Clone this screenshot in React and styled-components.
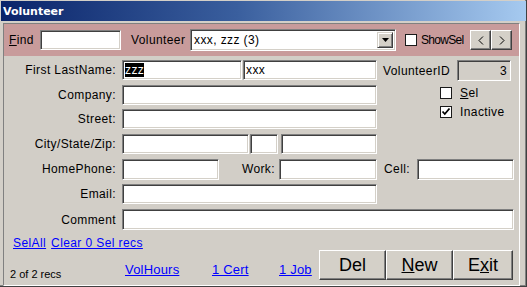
import React from 'react';
import styled, { createGlobalStyle } from 'styled-components';

const Global = createGlobalStyle`
  html, body { margin: 0; padding: 0; background: #d4d0c8; }
  body { font-family: "Liberation Sans", Arial, sans-serif; font-size: 12px; color: #000; letter-spacing: 0.4px; }
  #root { width: 527px; height: 287px; }
`;

const Window = styled.div`
  width: 527px;
  height: 287px;
  box-sizing: border-box;
  padding: 1px 1px 0 1px;
  background: #d3cfc8;
  display: flex;
  flex-direction: column;
  overflow: hidden;
  box-shadow: inset -1px -1px 0 #404040, inset -2px -2px 0 #808080;
`;

const TitleBar = styled.div`
  height: 20px;
  flex-shrink: 0;
  display: flex;
  align-items: center;
  padding-left: 2px;
  background: linear-gradient(to right, #0a246a 0%, #3a5f9e 45%, #a6caf0 100%);
  color: #fff;
  font-family: "DejaVu Sans", Verdana, sans-serif;
  font-weight: bold;
  font-size: 11px;
  letter-spacing: 0;
`;

const Frame = styled.div`
  flex: 1;
  margin: 2px 6px 3px 2px;
  display: flex;
  flex-direction: column;
  border-top: 1px solid #808080;
  border-left: 1px solid #808080;
  border-right: 1px solid #ffffff;
  border-bottom: 1px solid #ffffff;
  background: #d2cec7;
`;

const Header = styled.div`
  height: 32px;
  flex-shrink: 0;
  display: flex;
  align-items: center;
  padding: 0 7px 0 5px;
  background: #c89b9b;
`;

const HeaderLabel = styled.span`
  width: ${p => p.$w}px;
  margin-left: ${p => p.$ml || 0}px;
  flex-shrink: 0;
  white-space: nowrap;
`;

const TextBox = styled.div`
  box-sizing: border-box;
  width: ${p => p.$w}px;
  height: ${p => p.$h || 20}px;
  margin-left: ${p => p.$ml || 0}px;
  flex-shrink: 0;
  display: flex;
  align-items: center;
  justify-content: ${p => (p.$right ? 'flex-end' : 'flex-start')};
  padding: 0 3px 0 2px;
  background: ${p => (p.$gray ? '#d2cec7' : '#ffffff')};
  border-top: 1px solid #808080;
  border-left: 1px solid #808080;
  border-right: 1px solid #ffffff;
  border-bottom: 1px solid #ffffff;
  box-shadow: inset 1px 1px 0 #404040, inset -1px -1px 0 #d4d0c8;
  white-space: nowrap;
  overflow: hidden;
`;

const Selected = styled.span`
  background: #000;
  color: #fff;
  line-height: 14px;
`;

const Combo = styled.div`
  box-sizing: border-box;
  width: 206px;
  height: 22px;
  flex-shrink: 0;
  display: flex;
  align-items: center;
  padding: 2px 2px 2px 3px;
  background: #fff;
  border-top: 1px solid #808080;
  border-left: 1px solid #808080;
  border-right: 1px solid #ffffff;
  border-bottom: 1px solid #ffffff;
  box-shadow: inset 1px 1px 0 #404040, inset -1px -1px 0 #d4d0c8;
`;

const ComboText = styled.span`
  flex: 1;
`;

const DropButton = styled.div`
  box-sizing: border-box;
  width: 16px;
  height: 16px;
  display: flex;
  align-items: center;
  justify-content: center;
  background: #d4d0c8;
  border-top: 1px solid #d4d0c8;
  border-left: 1px solid #d4d0c8;
  border-right: 1px solid #404040;
  border-bottom: 1px solid #404040;
  box-shadow: inset 1px 1px 0 #ffffff, inset -1px -1px 0 #808080;
`;

const Check = styled.div`
  box-sizing: border-box;
  width: 12px;
  height: 12px;
  margin-left: ${p => p.$ml || 0}px;
  flex-shrink: 0;
  background: #fff;
  border: 1px solid #1a1a1a;
  display: flex;
  align-items: center;
  justify-content: center;
`;

const CheckText = styled.span`
  margin-left: ${p => p.$ml || 8}px;
  letter-spacing: ${p => (p.$tight ? '-0.7px' : '0.4px')};
  white-space: nowrap;
`;

const NavGroup = styled.div`
  margin-left: auto;
  display: flex;
`;

const NavButton = styled.div`
  box-sizing: border-box;
  width: 21px;
  height: 20px;
  display: flex;
  align-items: center;
  justify-content: center;
  background: #d4d0c8;
  border-top: 1px solid #ffffff;
  border-left: 1px solid #ffffff;
  border-right: 1px solid #404040;
  border-bottom: 1px solid #404040;
  box-shadow: inset -1px -1px 0 #808080;
`;

const Body = styled.div`
  flex: 1;
  display: flex;
  flex-direction: column;
`;

const Form = styled.div`
  display: flex;
  flex-direction: column;
  gap: 4.7px;
  padding-top: 4px;
`;

const TopSection = styled.div`
  display: flex;
  align-items: flex-start;
`;

const LeftCol = styled.div`
  width: 372px;
  display: flex;
  flex-direction: column;
  gap: 4.7px;
`;

const RightCol = styled.div`
  margin-left: 7px;
  display: flex;
  flex-direction: column;
`;

const Row = styled.div`
  display: flex;
  align-items: center;
  height: ${p => p.$h || 20}px;
`;

const FieldLabel = styled.span`
  width: 112px;
  margin-right: 6px;
  text-align: right;
  flex-shrink: 0;
  white-space: nowrap;
`;

const SubLabel = styled.span`
  width: ${p => p.$w}px;
  margin-left: ${p => p.$ml || 0}px;
  text-align: ${p => (p.$right ? 'right' : 'left')};
  flex-shrink: 0;
  white-space: nowrap;
`;

const CheckRow = styled.div`
  display: flex;
  align-items: center;
  height: 12px;
  padding-left: 57px;
  margin-top: ${p => p.$mt}px;
`;

const LinkRow = styled.div`
  display: flex;
  gap: 5px;
  padding-left: 9px;
  margin-top: 6px;
  height: 14px;
  line-height: 14px;
`;

const Link = styled.a`
  color: #0000ff;
  text-decoration: underline;
  font-size: ${p => p.$fs || 12}px;
  letter-spacing: ${p => (p.$fs ? '0.2px' : '0.4px')};
  cursor: pointer;
`;

const Footer = styled.div`
  margin-top: auto;
  display: flex;
  align-items: flex-end;
  height: 30px;
  padding: 0 6px 5px 6px;
`;

const RecCount = styled.span`
  width: 115px;
  font-size: 11px;
  line-height: 12px;
  letter-spacing: 0;
  flex-shrink: 0;
`;

const FooterLink = styled.span`
  width: ${p => p.$w}px;
  flex-shrink: 0;
  line-height: 15px;
  margin-bottom: 2px;
`;

const ButtonGroup = styled.div`
  margin-left: auto;
  display: flex;
`;

const BigButton = styled.div`
  box-sizing: border-box;
  width: ${p => p.$w}px;
  height: 30px;
  display: flex;
  align-items: center;
  justify-content: center;
  background: #d4d0c8;
  border-top: 1px solid #ffffff;
  border-left: 1px solid #ffffff;
  border-right: 1px solid #404040;
  border-bottom: 1px solid #404040;
  box-shadow: inset -1px -1px 0 #808080;
  font-size: 18px;
  letter-spacing: 0;
`;

const CheckMark = () => (
  <svg width="10" height="10" viewBox="0 0 10 10">
    <polyline points="1.5,4.5 3.8,7 8.5,1.5" fill="none" stroke="#000" strokeWidth="1.8" />
  </svg>
);

const DownArrow = () => (
  <svg width="7" height="4" viewBox="0 0 7 4">
    <polygon points="0,0 7,0 3.5,4" fill="#000" />
  </svg>
);

const Chevron = ({ dir }) => (
  <svg width="6" height="9" viewBox="0 0 6 9">
    <polyline
      points={dir === 'left' ? '5,0.5 1,4.5 5,8.5' : '1,0.5 5,4.5 1,8.5'}
      fill="none"
      stroke="#000"
      strokeWidth="1"
    />
  </svg>
);

export default function App() {
  return (
    <>
      <Global />
      <Window>
        <TitleBar>Volunteer</TitleBar>
        <Frame>
          <Header>
            <HeaderLabel $w={31}><u>F</u>ind</HeaderLabel>
            <TextBox $w={81} />
            <HeaderLabel $w={59} $ml={10}>Volunteer</HeaderLabel>
            <Combo>
              <ComboText>xxx, zzz (3)</ComboText>
              <DropButton><DownArrow /></DropButton>
            </Combo>
            <Check $ml={9} />
            <CheckText $ml={4} $tight>ShowSel</CheckText>
            <NavGroup>
              <NavButton><Chevron dir="left" /></NavButton>
              <NavButton><Chevron dir="right" /></NavButton>
            </NavGroup>
          </Header>
          <Body>
            <Form>
              <TopSection>
                <LeftCol>
                  <Row>
                    <FieldLabel>First LastName:</FieldLabel>
                    <TextBox $w={120}><Selected>zzz</Selected></TextBox>
                    <TextBox $w={134} $ml={1}>xxx</TextBox>
                  </Row>
                  <Row>
                    <FieldLabel>Company:</FieldLabel>
                    <TextBox $w={255} />
                  </Row>
                  <Row>
                    <FieldLabel>Street:</FieldLabel>
                    <TextBox $w={255} />
                  </Row>
                </LeftCol>
                <RightCol>
                  <Row $h={21}>
                    <SubLabel $w={74}>VolunteerID</SubLabel>
                    <TextBox $w={54} $h={21} $gray $right>3</TextBox>
                  </Row>
                  <CheckRow $mt={6}>
                    <Check />
                    <CheckText $ml={8}><u>S</u>el</CheckText>
                  </CheckRow>
                  <CheckRow $mt={7}>
                    <Check><CheckMark /></Check>
                    <CheckText $ml={8}>Inactive</CheckText>
                  </CheckRow>
                </RightCol>
              </TopSection>
              <Row>
                <FieldLabel>City/State/Zip:</FieldLabel>
                <TextBox $w={127} />
                <TextBox $w={28} $ml={1} />
                <TextBox $w={96} $ml={3} />
              </Row>
              <Row $h={21}>
                <FieldLabel>HomePhone:</FieldLabel>
                <TextBox $w={97} $h={21} />
                <SubLabel $w={56} $right>Work:</SubLabel>
                <TextBox $w={98} $h={21} $ml={4} />
                <SubLabel $w={33} $ml={7}>Cell:</SubLabel>
                <TextBox $w={97} $h={21} />
              </Row>
              <Row>
                <FieldLabel>Email:</FieldLabel>
                <TextBox $w={255} />
              </Row>
              <Row $h={21}>
                <FieldLabel>Comment</FieldLabel>
                <TextBox $w={392} $h={21} />
              </Row>
            </Form>
            <LinkRow>
              <Link>SelAll</Link>
              <Link>Clear 0 Sel recs</Link>
            </LinkRow>
            <Footer>
              <RecCount>2 of 2 recs</RecCount>
              <FooterLink $w={87}><Link $fs={13}>VolHours</Link></FooterLink>
              <FooterLink $w={67}><Link $fs={13}>1 Cert</Link></FooterLink>
              <FooterLink $w={36}><Link $fs={13}>1 Job</Link></FooterLink>
              <ButtonGroup>
                <BigButton $w={67}>Del</BigButton>
                <BigButton $w={67}><span><u>N</u>ew</span></BigButton>
                <BigButton $w={60}><span>E<u>x</u>it</span></BigButton>
              </ButtonGroup>
            </Footer>
          </Body>
        </Frame>
      </Window>
    </>
  );
}
